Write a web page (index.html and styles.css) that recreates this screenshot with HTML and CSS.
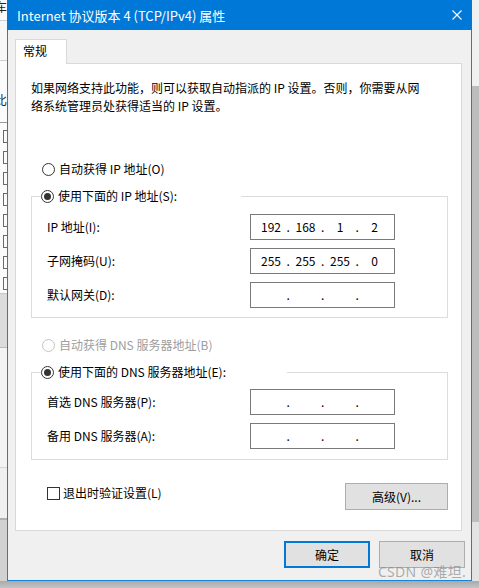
FILE: index.html
```html
<!DOCTYPE html>
<html lang="zh-CN">
<head>
<meta charset="utf-8">
<title>Internet 协议版本 4 (TCP/IPv4) 属性</title>
<link rel="stylesheet" href="styles.css">
</head>
<body>
<div class="screen">
  <div class="left-strip">
    <div class="ls-a"><span class="ls-char">车</span></div>
    <div class="ls-b"></div>
    <div class="ls-c"><span class="ls-char">比</span></div>
    <div class="ls-d">
      <span class="ls-box"></span><span class="ls-box"></span><span class="ls-box"></span><span class="ls-box"></span>
      <span class="ls-box"></span><span class="ls-box"></span><span class="ls-box"></span><span class="ls-box"></span>
    </div>
    <div class="ls-e"></div>
    <div class="ls-f"></div>
    <div class="ls-g"></div>
    <div class="ls-h"></div>
  </div>

  <div class="dialog">
    <div class="titlebar">
      <span class="title">Internet 协议版本 4 (TCP/IPv4) 属性</span>
      <svg class="close" width="10" height="10" viewBox="0 0 10 10"><path d="M0.5 0.5 L9.5 9.5 M9.5 0.5 L0.5 9.5" stroke="#fff" stroke-width="1.1" fill="none"/></svg>
    </div>
    <div class="body">
      <div class="tabs"><div class="tab">常规</div></div>
      <div class="panel">
        <p class="desc">如果网络支持此功能，则可以获取自动指派的 IP 设置。否则，你需要从网络系统管理员处获得适当的 IP 设置。</p>

        <div class="radio-row r-auto-ip"><span class="radio"></span><span>自动获得 IP 地址(O)</span></div>

        <div class="group g-ip">
          <div class="legend"><span class="radio checked"></span><span>使用下面的 IP 地址(S):</span></div>
          <div class="field-row">
            <span class="label">IP 地址(I):</span>
            <div class="ip"><span class="oct">192</span><span class="dot">.</span><span class="oct">168</span><span class="dot">.</span><span class="oct">1</span><span class="dot">.</span><span class="oct">2</span></div>
          </div>
          <div class="field-row">
            <span class="label">子网掩码(U):</span>
            <div class="ip"><span class="oct">255</span><span class="dot">.</span><span class="oct">255</span><span class="dot">.</span><span class="oct">255</span><span class="dot">.</span><span class="oct">0</span></div>
          </div>
          <div class="field-row">
            <span class="label">默认网关(D):</span>
            <div class="ip"><span class="oct"></span><span class="dot">.</span><span class="oct"></span><span class="dot">.</span><span class="oct"></span><span class="dot">.</span><span class="oct"></span></div>
          </div>
        </div>

        <div class="radio-row disabled r-auto-dns"><span class="radio"></span><span>自动获得 DNS 服务器地址(B)</span></div>

        <div class="group g-dns">
          <div class="legend"><span class="radio checked"></span><span>使用下面的 DNS 服务器地址(E):</span></div>
          <div class="field-row">
            <span class="label">首选 DNS 服务器(P):</span>
            <div class="ip"><span class="oct"></span><span class="dot">.</span><span class="oct"></span><span class="dot">.</span><span class="oct"></span><span class="dot">.</span><span class="oct"></span></div>
          </div>
          <div class="field-row">
            <span class="label">备用 DNS 服务器(A):</span>
            <div class="ip"><span class="oct"></span><span class="dot">.</span><span class="oct"></span><span class="dot">.</span><span class="oct"></span><span class="dot">.</span><span class="oct"></span></div>
          </div>
        </div>

        <div class="bottom-row">
          <label class="check-row"><span class="checkbox"></span><span>退出时验证设置(L)</span></label>
          <button class="btn btn-adv">高级(V)...</button>
        </div>
      </div>
      <div class="footer">
        <button class="btn btn-default">确定</button>
        <button class="btn">取消</button>
      </div>
    </div>
    <div class="watermark">CSDN @难坦.</div>
  </div>

  <div class="right-strip">
    <div class="rs-a"></div>
    <div class="rs-b"></div>
    <div class="rs-c"></div>
  </div>
</div>
<div class="bottom-shade"></div>
</body>
</html>
```

FILE: styles.css
```css
* { box-sizing: border-box; }
html, body {
  margin: 0;
  padding: 0;
}
body {
  width: 479px;
  height: 588px;
  overflow: hidden;
  background: #f3f3f3;
  font-family: "Noto Sans CJK SC", "Noto Sans", sans-serif;
  font-size: 12px;
  color: #000;
}
.screen {
  display: flex;
  height: 581px;
}

/* background window fragments */
.left-strip {
  width: 7px;
  display: flex;
  flex-direction: column;
  background: #fbfbfb;
  overflow: hidden;
}
.ls-char {
  display: block;
  font-size: 12px;
  line-height: 12px;
  margin-left: -5px;
  color: #222;
}
.ls-a { height: 21px; border-bottom: 1px solid #cfcfcf; padding-top: 1px; }
.ls-b { height: 40px; border-bottom: 1px solid #d0d0d0; background: #f7f7f7; }
.ls-c { height: 62px; padding-top: 33px; border-bottom: 1px solid #9a9a9a; }
.ls-d { height: 170px; display: flex; flex-direction: column; gap: 8px; padding-top: 7px; }
.ls-box { display: block; width: 8px; height: 13px; margin-left: 3px; border: 1px solid #6a6a6a; border-right: none; }
.ls-e { height: 55px; border-top: 1px solid #c8c8c8; border-bottom: 1px solid #bcbcbc; background: #dcdcdc; }
.ls-f { height: 120px; border-bottom: 1px solid #d6d6d6; background: #f4f4f4; }
.ls-g { height: 52px; background: #f0f0f0; border-bottom: 2px solid #b0b0b0; }
.ls-h { flex: 1; background: #d2d2d2; }

.right-strip {
  flex: 1;
  display: flex;
  flex-direction: column;
}
.rs-a { height: 86px; background: #f0f0f0; }
.rs-b { height: 436px; background: #bdbdbd; }
.rs-c { flex: 1; background: #e3e3e3; }

.bottom-shade {
  height: 7px;
  background: linear-gradient(to bottom, #a9a9a9, #c4c4c4);
}

/* dialog */
.dialog {
  position: relative;
  width: 465px;
  height: 581px;
  border: 1px solid #1a80d8;
  background: #f0f0f0;
  display: flex;
  flex-direction: column;
}
.titlebar {
  height: 30px;
  margin: -1px -1px 0 -1px;
  padding: 0 10px 0 10px;
  background: #0078d7;
  color: #fff;
  display: flex;
  align-items: center;
  justify-content: space-between;
}
.title {
  font-size: 13px;
  line-height: 16px;
  padding-top: 1px;
}
.close { display: block; margin-right: 0px; }

.body {
  flex: 1;
  padding: 9px 6px 0 6px;
  display: flex;
  flex-direction: column;
}
.tabs {
  display: flex;
  padding-left: 1px;
}
.tab {
  position: relative;
  z-index: 1;
  width: 52px;
  height: 25px;
  margin-bottom: -1px;
  background: #fff;
  border: 1px solid #d9d9d9;
  border-bottom: none;
  padding-left: 7px;
  line-height: 21px;
}
.panel {
  margin-left: 1px;
  width: 447px;
  height: 468px;
  background: #fff;
  border: 1px solid #d9d9d9;
  padding: 15px 13px 0 15px;
  display: flex;
  flex-direction: column;
}
.desc {
  margin: 0;
  line-height: 18px;
  width: 400px;
}

.radio-row {
  display: flex;
  align-items: center;
  height: 18px;
  line-height: 18px;
  margin-left: 11px;
}
.radio {
  width: 13px;
  height: 13px;
  border: 1px solid #333;
  border-radius: 50%;
  background: #fff;
  margin-right: 4px;
  flex: none;
  display: flex;
  align-items: center;
  justify-content: center;
}
.radio.checked::after {
  content: "";
  width: 7px;
  height: 7px;
  border-radius: 50%;
  background: #333;
}
.radio-row.disabled { color: #9d9d9d; }
.radio-row.disabled .radio { border-color: #c4c4c4; }
.r-auto-ip { margin-top: 45px; }
.r-auto-dns { margin-top: 18px; }

.group {
  width: 417px;
  border: 1px solid #dcdcdc;
  display: flex;
  flex-direction: column;
  gap: 8px;
}
.g-ip { margin-top: 18px; padding-bottom: 9px; }
.g-dns { margin-top: 18px; padding-bottom: 10px; }
.legend {
  display: flex;
  align-items: center;
  height: 18px;
  line-height: 18px;
  margin-top: -10px;
  margin-left: 9px;
  margin-bottom: 1px;
  background: #fff;
  width: 200px;
}
.g-dns .legend { width: 246px; margin-bottom: 0; }

.field-row {
  display: flex;
  align-items: center;
  height: 26px;
  padding-left: 15px;
}
.label {
  width: 203px;
  line-height: 18px;
}
.ip {
  width: 145px;
  height: 26px;
  border: 1px solid #7a7a7a;
  background: #fff;
  display: flex;
  align-items: center;
  padding-left: 6px;
  line-height: 18px;
}
.oct {
  width: 28px;
  text-align: center;
}
.dot {
  width: 6.5px;
  text-align: center;
}

.bottom-row {
  display: flex;
  justify-content: space-between;
  align-items: flex-start;
  margin-top: 23px;
  width: 417px;
}
.check-row {
  display: flex;
  align-items: center;
  margin-left: 16px;
  margin-top: 1px;
  line-height: 18px;
}
.checkbox {
  width: 13px;
  height: 13px;
  border: 1px solid #333;
  background: #fff;
  margin-right: 3px;
}

.btn {
  font-family: inherit;
  font-size: 12px;
  color: #000;
  background: #e1e1e1;
  border: 1px solid #adadad;
  height: 27px;
  padding: 0;
  line-height: 18px;
}
.btn-adv { width: 103px; }
.footer {
  display: flex;
  justify-content: flex-end;
  gap: 9px;
  margin-top: 10px;
}
.footer .btn { width: 86px; }
.btn-default { border: 2px solid #0078d7; }

.watermark {
  position: absolute;
  right: 5px;
  bottom: 1px;
  font-family: "Noto Sans", "Noto Sans CJK SC", sans-serif;
  font-size: 14px;
  line-height: 15px;
  color: rgba(140, 140, 140, 0.7);
  letter-spacing: 0.3px;
}
```
